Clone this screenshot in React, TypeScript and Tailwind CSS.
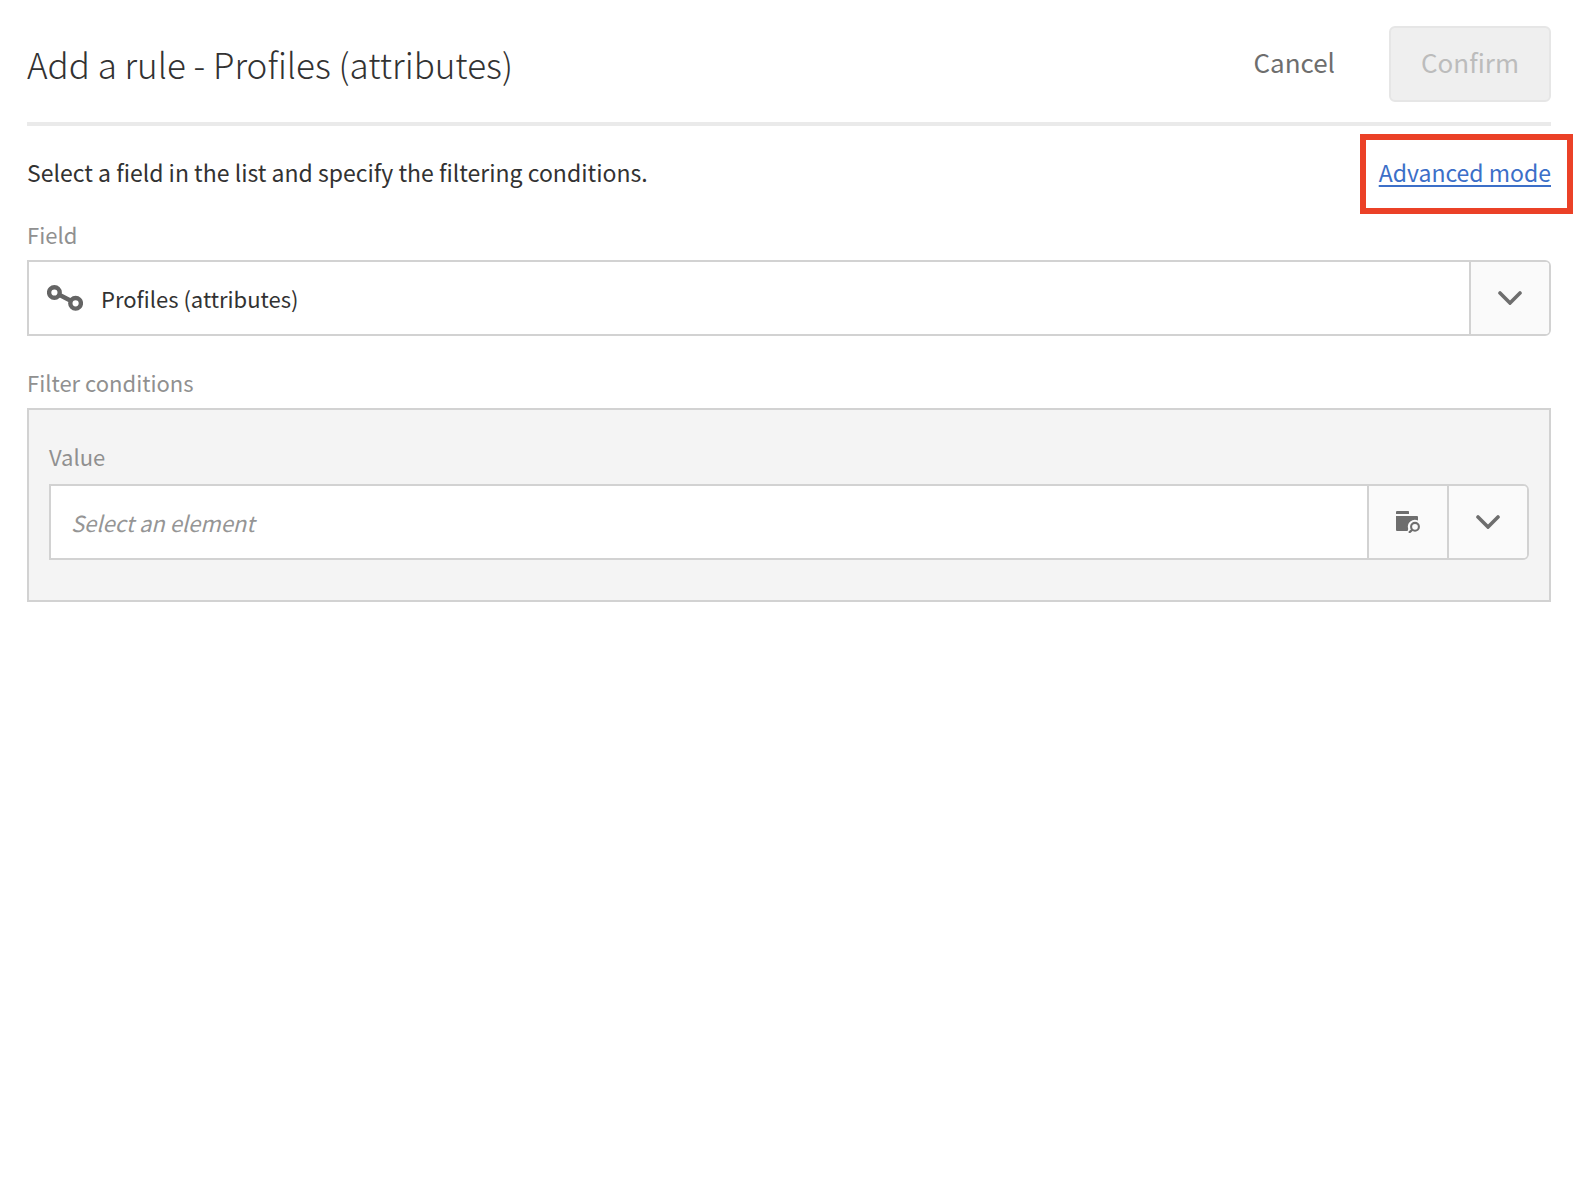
function Chevron() {
  return (
    <svg width="24" height="14" viewBox="0 0 24 14" fill="none" stroke="#6e6e6e" strokeWidth="3.6" strokeLinecap="round" aria-hidden="true">
      <path d="M2 2l10 10L22 2" />
    </svg>
  );
}

function LinkNodes() {
  return (
    <svg width="36" height="26" viewBox="0 0 36 26" fill="none" stroke="#646464" strokeWidth="4.4" aria-hidden="true">
      <circle cx="7.4" cy="7.5" r="5.3" />
      <circle cx="28.6" cy="18.3" r="5.3" />
      <path d="M12.2 9.8l11.6 6" />
    </svg>
  );
}

function FolderSearch() {
  return (
    <svg width="24" height="22" viewBox="0 0 24 22" aria-hidden="true">
      <path fill="#6e6e6e" d="M0 3V1Q0 0 1 0h11.2q.8 0 .8.8V3z" />
      <path fill="#6e6e6e" d="M0 5h21q1 0 1 1v3.6a7 7 0 0 0-9.8 8.4L11.6 20H1q-1 0-1-1z" />
      <circle cx="19" cy="15.8" r="3.9" fill="none" stroke="#6e6e6e" strokeWidth="2.1" />
      <path d="M16.2 18.9l-2.6 2.2" stroke="#6e6e6e" strokeWidth="2.2" strokeLinecap="round" />
    </svg>
  );
}

export default function App() {
  return (
    <main className="min-h-screen bg-white px-[27px] pt-[26px] font-['Noto_Sans_CJK_SC','Noto_Sans',sans-serif] text-[22px] leading-[36px] text-[#323232]">
      <header className="flex items-center border-b-4 border-[#eaeaea] pb-5">
        <h1 className="flex-1 text-[35px] leading-[56px] font-light text-[#323232]">Add a rule - Profiles (attributes)</h1>
        <button type="button" className="h-[76px] px-[54px] pb-1 text-[26px] text-[#6e6e6e]">
          Cancel
        </button>
        <button type="button" disabled className="h-[76px] w-[162px] rounded-md border-2 border-[#e6e6e6] bg-[#efefef] pb-1 text-[26px] text-[#bcbcbc]">
          Confirm
        </button>
      </header>

      <div className="mt-7 flex items-center justify-between text-[23px]">
        <p>Select a field in the list and specify the filtering conditions.</p>
        <a href="#advanced" className="relative text-[#3c6fc8] underline decoration-2 underline-offset-3">
          Advanced mode
          <span className="pointer-events-none absolute -top-5 -right-[22px] -bottom-6 -left-[19px] border-6 border-[#eb4127]" />
        </a>
      </div>

      <label htmlFor="field" className="mt-[26px] block text-[#909090]">
        Field
      </label>
      <div className="mt-2 grid h-[76px] grid-cols-[auto_1fr_80px] items-center overflow-hidden rounded-r-md border-2 border-[#d2d2d2]">
        <select id="field" className="col-span-3 col-start-1 row-start-1 h-full w-full appearance-none bg-white pl-[72px] text-[#323232]">
          <option>Profiles (attributes)</option>
        </select>
        <span className="pointer-events-none col-start-1 row-start-1 ml-[18px]">
          <LinkNodes />
        </span>
        <span className="pointer-events-none col-start-3 row-start-1 flex h-full items-center justify-center border-l-2 border-[#d2d2d2] bg-[#fafafa]">
          <Chevron />
        </span>
      </div>

      <h2 className="mt-7 text-[#909090]">Filter conditions</h2>
      <section className="mt-2 border-2 border-[#d2d2d2] bg-[#f4f4f4] px-5 pt-7 pb-10">
        <label htmlFor="value" className="block text-[#909090]">
          Value
        </label>
        <div className="mt-[10px] flex h-[76px] overflow-hidden rounded-r-md border-2 border-[#d2d2d2] bg-white">
          <input id="value" type="text" placeholder="Select an element" className="min-w-0 flex-1 px-5 outline-none placeholder:text-[#959595] placeholder:italic" />
          <button type="button" aria-label="Browse elements" className="flex w-20 items-center justify-center border-l-2 border-[#d2d2d2] bg-[#fafafa]">
            <FolderSearch />
          </button>
          <button type="button" aria-label="Show options" className="flex w-20 items-center justify-center border-l-2 border-[#d2d2d2] bg-[#fafafa]">
            <Chevron />
          </button>
        </div>
      </section>
    </main>
  );
}
